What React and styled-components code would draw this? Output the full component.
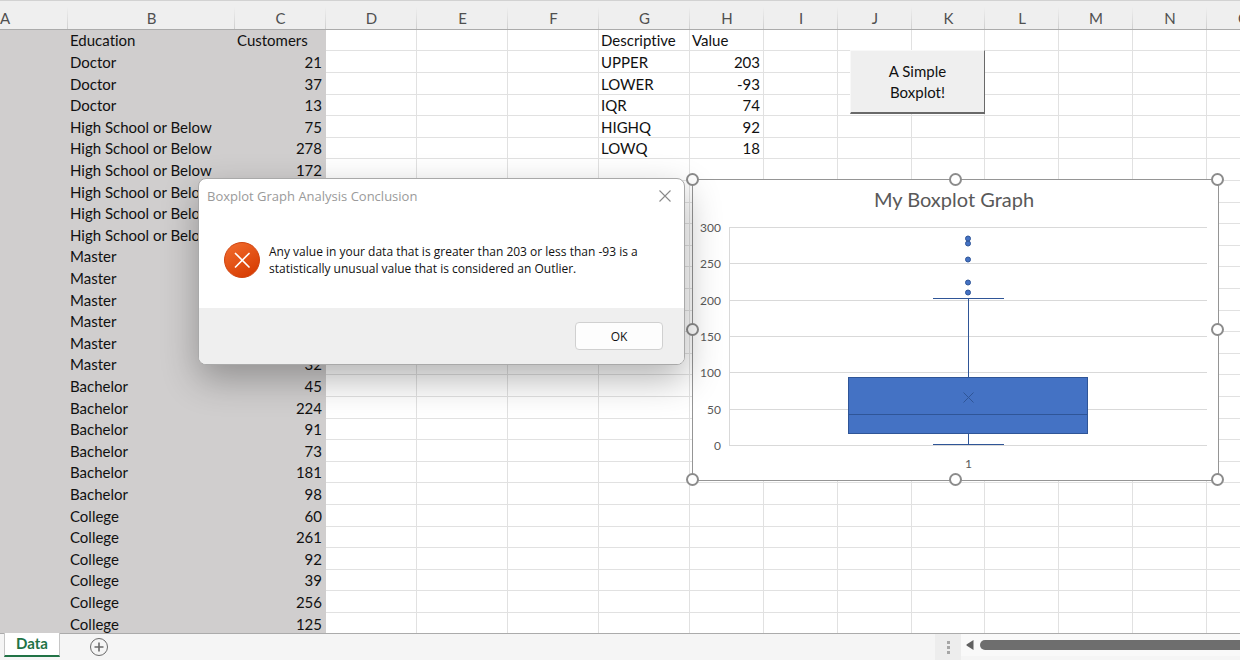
import React, { useState } from 'react';
import styled, { createGlobalStyle } from 'styled-components';

const COLUMNS = [
  { name: 'A', width: 68 },
  { name: 'B', width: 167 },
  { name: 'C', width: 91 },
  { name: 'D', width: 91 },
  { name: 'E', width: 91 },
  { name: 'F', width: 91 },
  { name: 'G', width: 91 },
  { name: 'H', width: 74 },
  { name: 'I', width: 74 },
  { name: 'J', width: 74 },
  { name: 'K', width: 73 },
  { name: 'L', width: 74 },
  { name: 'M', width: 74 },
  { name: 'N', width: 74 },
  { name: 'O', width: 74 },
];

const SELECTED = ['A', 'B', 'C'];

const RECORDS = [
  ['Education', 'Customers'],
  ['Doctor', 21],
  ['Doctor', 37],
  ['Doctor', 13],
  ['High School or Below', 75],
  ['High School or Below', 278],
  ['High School or Below', 172],
  ['High School or Below', null],
  ['High School or Below', null],
  ['High School or Below', null],
  ['Master', null],
  ['Master', null],
  ['Master', null],
  ['Master', null],
  ['Master', null],
  ['Master', 32],
  ['Bachelor', 45],
  ['Bachelor', 224],
  ['Bachelor', 91],
  ['Bachelor', 73],
  ['Bachelor', 181],
  ['Bachelor', 98],
  ['College', 60],
  ['College', 261],
  ['College', 92],
  ['College', 39],
  ['College', 256],
  ['College', 125],
];

const STATS = [
  ['Descriptive', 'Value'],
  ['UPPER', 203],
  ['LOWER', -93],
  ['IQR', 74],
  ['HIGHQ', 92],
  ['LOWQ', 18],
];

const BOX = { low: 2, q1: 17, median: 42, mean: 66, q3: 93, high: 202 };
const OUTLIERS = [210, 224, 256, 278, 285];
const TICKS = [0, 50, 100, 150, 200, 250, 300];

const cellValue = (column, row) => {
  if (column === 'B') return RECORDS[row][0];
  if (column === 'C') return RECORDS[row][1];
  if (column === 'G' && STATS[row]) return STATS[row][0];
  if (column === 'H' && STATS[row]) return STATS[row][1];
  return null;
};

const Sheet = () => (
  <Grid>
    <colgroup>
      {COLUMNS.map(({ name, width }) => <col key={name} width={width} />)}
    </colgroup>
    <thead>
      <tr>
        {COLUMNS.map(({ name }) => <HeadCell key={name} $cut={name === 'A'}>{name}</HeadCell>)}
      </tr>
    </thead>
    <tbody>
      {RECORDS.map((record, row) => (
        <Row key={row}>
          {COLUMNS.map(({ name }) => {
            const value = cellValue(name, row);
            return (
              <Cell key={name} $selected={SELECTED.includes(name)} $number={typeof value === 'number'}>
                {value}
              </Cell>
            );
          })}
        </Row>
      ))}
    </tbody>
  </Grid>
);

// value -> y inside the 525x300 chart
const toY = value => Math.round(265 - value * 218 / 300) + 0.5;

const BoxplotChart = () => (
  <ChartFrame>
    <Plot viewBox="0 0 525 300" role="img" aria-label="My Boxplot Graph">
      <ChartTitle x="261" y="27">My Boxplot Graph</ChartTitle>
      <g stroke="#d9d9d9">
        {TICKS.map(tick => <line key={tick} x1="36" x2="514" y1={toY(tick)} y2={toY(tick)} />)}
        <line x1="36.5" x2="36.5" y1={toY(300)} y2={toY(0)} />
      </g>
      {TICKS.map(tick => <AxisLabel key={tick} x="28" y={toY(tick) + 4}>{tick}</AxisLabel>)}
      <AxisLabel x="279" y="288">1</AxisLabel>
      <g stroke="#2f5597" fill="none">
        <line x1="275.5" x2="275.5" y1={toY(BOX.high)} y2={toY(BOX.q3)} />
        <line x1="275.5" x2="275.5" y1={toY(BOX.q1)} y2={toY(BOX.low)} />
        <line x1="240" x2="311" y1={toY(BOX.high)} y2={toY(BOX.high)} />
        <line x1="240" x2="311" y1={toY(BOX.low)} y2={toY(BOX.low)} />
        <rect x="155.5" width="239" y={toY(BOX.q3)} height={toY(BOX.q1) - toY(BOX.q3)} fill="#4472c4" />
        <line x1="156" x2="394" y1={toY(BOX.median)} y2={toY(BOX.median)} />
        <path d={`M270.5 ${toY(BOX.mean) - 5}l10 10m0 -10l-10 10`} />
      </g>
      {OUTLIERS.map(value => (
        <circle key={value} cx="275" cy={toY(value)} r="2.5" fill="#4472c4" stroke="#2f5597" />
      ))}
    </Plot>
    {['0 0', '50% 0', '100% 0', '0 50%', '100% 50%', '0 100%', '50% 100%', '100% 100%'].map(spot => (
      <Handle key={spot} $left={spot.split(' ')[0]} $top={spot.split(' ')[1]} />
    ))}
  </ChartFrame>
);

const MessageBox = ({ onClose }) => (
  <Dialog role="dialog" aria-labelledby="message-title">
    <DialogBar>
      <DialogTitle id="message-title">Boxplot Graph Analysis Conclusion</DialogTitle>
      <CloseButton aria-label="Close" onClick={onClose}>
        <svg width="12" height="12" viewBox="0 0 12 12" stroke="#8a8a8a" strokeWidth="1.1">
          <path d="M0.5 0.5l11 11M11.5 0.5l-11 11" />
        </svg>
      </CloseButton>
    </DialogBar>
    <DialogBody>
      <svg width="36" height="36" viewBox="0 0 36 36">
        <defs>
          <linearGradient id="error" x1="0.2" y1="0" x2="0.8" y2="1">
            <stop offset="0" stopColor="#f06a2c" />
            <stop offset="1" stopColor="#d63a00" />
          </linearGradient>
        </defs>
        <circle cx="18" cy="18" r="17.5" fill="url(#error)" stroke="#cf4410" />
        <path d="M11.5 11.5l13.5 13.5M25 11.5l-13.5 13.5" stroke="#fff" strokeWidth="1.7" strokeLinecap="round" />
      </svg>
      <Message>
        Any value in your data that is greater than 203 or less than -93 is a<br />
        statistically unusual value that is considered an Outlier.
      </Message>
    </DialogBody>
    <DialogFooter>
      <OkButton onClick={onClose}>OK</OkButton>
    </DialogFooter>
  </Dialog>
);

const App = () => {
  const [ showMessage, setShowMessage ] = useState(true);

  return (
    <Root>
      <GlobalStyle />
      <Workspace>
        <Sheet />
        <MacroButton onClick={() => setShowMessage(true)}>A Simple<br />Boxplot!</MacroButton>
        <BoxplotChart />
        {showMessage && <MessageBox onClose={() => setShowMessage(false)} />}
      </Workspace>
      <BottomBar>
        <SheetTab>Data</SheetTab>
        <AddSheet aria-label="New sheet">
          <svg width="20" height="20" viewBox="0 0 20 20" fill="none" stroke="#6a6a6a">
            <circle cx="10" cy="10" r="8.5" />
            <path d="M10 5.5v9M5.5 10h9" strokeWidth="1.6" />
          </svg>
        </AddSheet>
        <Splitter>
          <Dot />
          <Dot />
          <Dot />
        </Splitter>
        <ScrollArea>
          <ScrollLeft aria-label="Scroll left">
            <svg width="8" height="10" viewBox="0 0 8 10">
              <path d="M7.5 0v10L0.5 5.5v-1z" fill="#606060" />
            </svg>
          </ScrollLeft>
          <ScrollThumb />
        </ScrollArea>
      </BottomBar>
    </Root>
  );
};

const sheetFont = 'Lato, "Liberation Sans", sans-serif';
const systemFont = '"Open Sans", "Noto Sans", sans-serif';

const GlobalStyle = createGlobalStyle`
  * {
    box-sizing: border-box;
  }
  body {
    margin: 0;
    background: #fff;
    font-family: ${sheetFont};
    font-variant-ligatures: none;
  }
  button {
    padding: 0;
    border: none;
    background: none;
    font-family: inherit;
    color: inherit;
  }
  svg {
    display: block;
  }
`;

const Root = styled.div`
  display: flex;
  flex-direction: column;
  height: 100vh;
  overflow: hidden;
`;

const Workspace = styled.main`
  position: relative;
  flex: 1;
  min-height: 0;
  overflow: hidden;
`;

const Grid = styled.table`
  table-layout: fixed;
  width: 100%;
  min-width: 1281px;
  border-collapse: separate;
  border-spacing: 0;
  font-size: 15px;
  line-height: 20px;
  color: #111;
  thead {
    background: linear-gradient(#d2d2d2 1px, #efefef 1px);
  }
`;

const HeadCell = styled.th`
  height: 30px;
  padding: 7px 0 1px;
  border-bottom: 1px solid #ababab;
  background: linear-gradient(#efefef, #cfcfcf) right bottom / 1px 22px no-repeat;
  font-weight: 400;
  color: #505050;
  text-align: ${({ $cut }) => ($cut ? 'left' : 'center')};
`;

const Row = styled.tr`
  height: 22px;
  &:nth-child(5n + 1),
  &:nth-child(5n + 4) {
    height: 21px;
  }
`;

const Cell = styled.td`
  padding: 0 3px 0 2px;
  border-right: 1px solid ${({ $selected }) => ($selected ? '#d0cece' : '#e1e1e1')};
  border-bottom: 1px solid ${({ $selected }) => ($selected ? '#d0cece' : '#e1e1e1')};
  background: ${({ $selected }) => ($selected ? '#d0cece' : '#fff')};
  text-align: ${({ $number }) => ($number ? 'right' : 'left')};
  white-space: nowrap;
`;

const MacroButton = styled.button`
  position: absolute;
  left: 850px;
  top: 50px;
  width: 135px;
  height: 64px;
  border: 1px solid #f8f8f8;
  border-right: 1px solid #696969;
  border-bottom: 2px solid #696969;
  background: #efefef;
  font-size: 15px;
  line-height: 21px;
  color: #111;
`;

const ChartFrame = styled.section`
  position: absolute;
  left: 692px;
  top: 179px;
  width: 527px;
  height: 302px;
  border: 1px solid #959595;
  background: #fff;
`;

const Plot = styled.svg`
  width: 100%;
  height: 100%;
`;

const ChartTitle = styled.text`
  font-size: 20px;
  fill: #595959;
  text-anchor: middle;
`;

const AxisLabel = styled.text`
  font-size: 12px;
  fill: #595959;
  text-anchor: end;
`;

const Handle = styled.span`
  position: absolute;
  left: ${({ $left }) => $left};
  top: ${({ $top }) => $top};
  width: 13px;
  height: 13px;
  margin: -7px 0 0 -7px;
  border: 2px solid #8c8c8c;
  border-radius: 50%;
  background: #fff;
`;

const Dialog = styled.div`
  position: absolute;
  left: 198px;
  top: 178px;
  width: 487px;
  border: 1px solid #a9a9a9;
  border-radius: 8px;
  background: #fff;
  box-shadow: 0 14px 36px rgba(0, 0, 0, 0.3);
  font-family: ${systemFont};
  overflow: hidden;
`;

const DialogBar = styled.div`
  display: flex;
  justify-content: space-between;
  align-items: center;
  height: 33px;
  padding: 0 13px 0 8px;
`;

const DialogTitle = styled.h1`
  margin: 0;
  font-size: 13px;
  line-height: 18px;
  font-weight: 400;
  color: #9a9a9a;
`;

const CloseButton = styled.button`
  cursor: pointer;
`;

const DialogBody = styled.div`
  display: flex;
  align-items: center;
  gap: 9px;
  height: 96px;
  padding: 0 25px;
`;

const Message = styled.p`
  margin: 0;
  font-size: 12px;
  line-height: 17px;
  color: #111;
  white-space: nowrap;
`;

const DialogFooter = styled.div`
  display: flex;
  justify-content: flex-end;
  align-items: center;
  height: 56px;
  padding: 0 21px;
  background: #efefef;
`;

const OkButton = styled.button`
  width: 88px;
  height: 28px;
  border: 1px solid #d0d0d0;
  border-radius: 4px;
  background: #fdfdfd;
  font-size: 12px;
  color: #111;
`;

const BottomBar = styled.footer`
  display: flex;
  height: 27px;
  border-top: 1px solid #ababab;
  background: #f5f5f5;
`;

const SheetTab = styled.button`
  width: 56px;
  height: 24px;
  margin: -1px 0 0 4px;
  padding-bottom: 3px;
  border: 1px solid #c6c6c6;
  border-top: none;
  border-bottom: 2px solid #217346;
  background: #fff;
  font-size: 15px;
  line-height: 20px;
  font-weight: 700;
  color: #217346;
`;

const AddSheet = styled.button`
  align-self: center;
  margin-left: 29px;
`;

const Splitter = styled.div`
  display: flex;
  flex-direction: column;
  align-items: center;
  justify-content: center;
  gap: 2px;
  width: 26px;
  margin-left: auto;
  background: #ededed;
`;

const Dot = styled.span`
  width: 3px;
  height: 3px;
  background: #a6a6a6;
`;

const ScrollArea = styled.div`
  display: flex;
  align-items: center;
  gap: 6px;
  width: 279px;
  height: 22px;
  padding-left: 5px;
  background: #f9f9f9;
`;

const ScrollLeft = styled.button`
  cursor: pointer;
`;

const ScrollThumb = styled.div`
  flex: 1;
  height: 10px;
  border-radius: 5px 0 0 5px;
  background: #6e6e6e;
`;

export default App;
